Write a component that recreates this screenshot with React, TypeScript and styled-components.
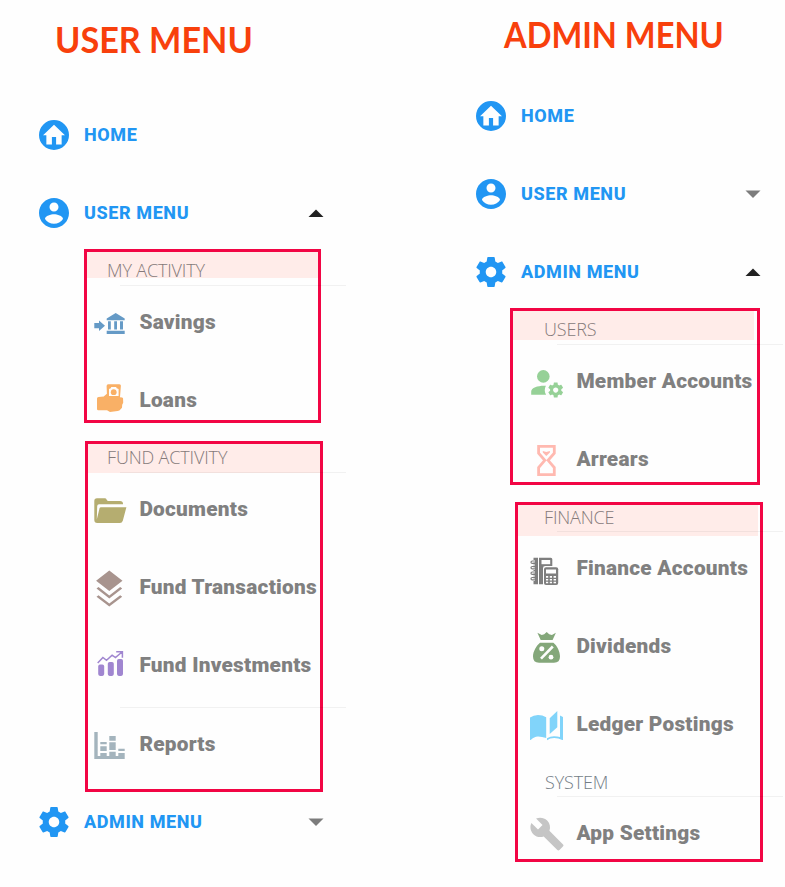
import React from "react";
import styled, { createGlobalStyle } from "styled-components";

const GlobalStyle = createGlobalStyle`
  * { box-sizing: border-box; }
  body { margin: 0; background: #fefefe; overflow: hidden; }
`;

const Page = styled.main`
  display: grid;
  grid-template-columns: 437px 348px;
  width: 785px;
  height: 887px;
  overflow: hidden;
  background: #fefefe;
`;

const Column = styled.section<{ $top: number }>`
  display: flex;
  flex-direction: column;
  align-items: flex-start;
  padding-top: ${(p) => p.$top}px;
  min-width: 0;
`;

const Title = styled.h1<{ $indent: number; $gap: number; $scale: number }>`
  margin: 0 0 ${(p) => p.$gap}px ${(p) => p.$indent}px;
  height: 40px;
  font: 700 36px/40px Lato, sans-serif;
  color: #f8400c;
  white-space: nowrap;
  transform: scaleX(${(p) => p.$scale});
  transform-origin: left center;
`;

const NavRow = styled.div`
  display: flex;
  align-items: center;
  flex: none;
  width: 324px;
  height: 40px;
  padding-left: 36px;
  margin-bottom: 38px;
  color: #2196f3;
`;

const NavLabel = styled.span`
  flex: 1;
  margin-left: 12px;
  font: 800 18px/24px Roboto, sans-serif;
  letter-spacing: 0.6px;
`;

const Frame = styled.div<{ $left: number; $width: number; $height: number; $before?: number; $after?: number }>`
  display: flex;
  flex-direction: column;
  flex: none;
  width: ${(p) => p.$width}px;
  height: ${(p) => p.$height}px;
  margin: ${(p) => p.$before ?? 0}px 0 ${(p) => p.$after ?? 0}px ${(p) => p.$left}px;
  border: 3px solid #f20544;
`;

const Band = styled.div<{ $height: number; $pad: number; $right?: number; $lift?: number; $plain?: boolean; $before?: number }>`
  flex: none;
  height: ${(p) => p.$height}px;
  margin-top: ${(p) => p.$before ?? 0}px;
  margin-right: ${(p) => p.$right ?? 0}px;
  padding-left: ${(p) => p.$pad}px;
  padding-top: ${(p) => p.$lift ?? 0}px;
  background: ${(p) => (p.$plain ? "transparent" : "#ffece9")};
  color: ${(p) => (p.$plain ? "#737d86" : "#857a7a")};
  font: 300 18px/24px "Open Sans", sans-serif;
  letter-spacing: -0.15px;
  white-space: nowrap;
`;

const Divider = styled.div<{ $left: number; $before: number; $after: number }>`
  flex: none;
  width: 226px;
  height: 1px;
  margin: ${(p) => p.$before}px 0 ${(p) => p.$after}px ${(p) => p.$left}px;
  background: rgba(0, 0, 0, 0.05);
`;

const Items = styled.div<{ $pad: number }>`
  display: flex;
  flex-direction: column;
  gap: 42px;
  padding-left: ${(p) => p.$pad}px;
`;

const ItemRow = styled.div`
  display: flex;
  align-items: center;
  height: 36px;
  white-space: nowrap;
`;

const ItemLabel = styled.span`
  margin-left: 9.4px;
  font: 900 20.8px/26px Roboto, sans-serif;
  letter-spacing: 0.25px;
  color: #808080;
`;

const Glyph = styled.svg<{ $size: number }>`
  display: block;
  flex: none;
  width: ${(p) => p.$size}px;
  height: ${(p) => p.$size}px;
`;

const NavGlyph = styled(Glyph)`
  margin-bottom: 1px;
`;

const GEAR =
  "M19.43 12.98c.04-.32.07-.64.07-.98s-.03-.66-.07-.98l2.11-1.65c.19-.15.24-.42.12-.64l-2-3.46c-.12-.22-.39-.3-.61-.22l-2.49 1c-.52-.4-1.08-.73-1.69-.98l-.38-2.65C14.46 2.18 14.25 2 14 2h-4c-.25 0-.46.18-.49.42l-.38 2.65c-.61.25-1.17.59-1.69.98l-2.49-1c-.23-.09-.49 0-.61.22l-2 3.46c-.13.22-.07.49.12.64l2.11 1.65c-.04.32-.07.65-.07.98s.03.66.07.98l-2.11 1.65c-.19.15-.24.42-.12.64l2 3.46c.12.22.39.3.61.22l2.49-1c.52.4 1.08.73 1.69.98l.38 2.65c.03.24.24.42.49.42h4c.25 0 .46-.18.49-.42l.38-2.65c.61-.25 1.17-.59 1.69-.98l2.49 1c.23.09.49 0 .61-.22l2-3.46c.12-.22.07-.49-.12-.64l-2.11-1.65zM12 15.5c-1.93 0-3.5-1.57-3.5-3.5s1.57-3.5 3.5-3.5 3.5 1.57 3.5 3.5-1.57 3.5-3.5 3.5z";

const NAV_PATHS = {
  home: "M12 2a10 10 0 1 0 0 20 10 10 0 0 0 0-20zM12 5.2l7.3 7h-2.2v6.1h-3.7v-5h-2.8v5H6.900v-6.100H4.700z",
  user: "M12 2C6.48 2 2 6.48 2 12s4.48 10 10 10 10-4.48 10-10S17.52 2 12 2zm0 3c1.66 0 3 1.34 3 3s-1.34 3-3 3-3-1.34-3-3 1.34-3 3-3zm0 14.2c-2.5 0-4.71-1.28-6-3.22.03-1.99 4-3.08 6-3.08 1.99 0 5.97 1.09 6 3.08-1.29 1.94-3.5 3.22-6 3.22z",
  gear: GEAR,
};

const ICONS: Record<string, { color: string; art: React.ReactNode }> = {
  Savings: {
    color: "#659ac6",
    art: (
      <path d="M4.3 21H9v-2.6l6 5.3-6 5.3v-2.7H4.3zM25.7 11l9 5.5v1.8h-18v-1.8zM18 19.2h2.8v8.2H18zM24.2 19.2h2.8v8.2h-2.8zM30 19.2h3v8.2h-3zM16.7 28.8h18V32h-18z" />
    ),
  },
  Loans: {
    color: "#f9b066",
    art: (
      <>
        <path d="M18.2 4.3h11.2q1.6 0 1.5 1.5L30 17.2l2.2.2q1.2.5.9 2l.1 3.4-1 2-.2 3-1.4 1.4q-1 1.6-3 1.7L20 32l-3-1.7H8.2Q7 30.3 7 29V18.6q0-1.5 1.5-1.7l5.2-.5 3.2-2.6-.3-7.8q0-1.7 1.6-1.7z" />
        <path d="M21.3 7h4.8l.6 1.3 1.9.8v7H19V9.1l1.7-.8z" fill="#fefefe" />
        <circle cx="23.7" cy="12.2" r="2.9" />
      </>
    ),
  },
  Documents: {
    color: "#b5ad70",
    art: (
      <path d="M4.3 12q0-2.7 2.7-2.7h7.8q1.4 0 1.9 1.4.5 1.3 1.8 1.3H30q3 0 3.1 3.3H9q-1.6 0-1.8 1.6L6.8 30.5 9.6 19q.3-.8 1.3-.8h25.5L32.8 31.8Q32 34 30 34H7.3q-3 0-3-3z" />
    ),
  },
  "Fund Transactions": {
    color: "#a8948e",
    art: (
      <path d="M19.3 3.6l13.2 10.2-13.2 10.3L6.1 13.8zM6.5 21.5l2-1.5 10.8 8.4L30.2 20l2 1.5-12.9 10zM6.5 29.7l2-1.5 10.8 8.3 10.9-8.3 2 1.5-12.9 9.8z" />
    ),
  },
  "Fund Investments": {
    color: "#a086d0",
    art: (
      <>
        <rect x="8.2" y="19.6" width="6" height="11.3" rx="1.8" />
        <rect x="17.8" y="16.9" width="6" height="14" rx="1.8" />
        <rect x="27" y="13.9" width="6" height="17" rx="1.8" />
        <path d="M7.7 18l5.2-5.5 3.6 2.8 5.6-5.2 3.4 2.4 6.8-5.7M26.2 6.7h6.2v6" fill="none" stroke="#a086d0" strokeWidth="1.5" />
      </>
    ),
  },
  Reports: {
    color: "#a4b4bd",
    art: (
      <path d="M4.3 8h3.4v24h2.6v-3h6.4v3h2.6v-4.3h6.4V32h2.6v-3h6.4v6H4.3zM10.3 18h6.4v2.3h-6.4zM10.3 22.3h6.4V27h-6.4zM19.3 12h6.4v4.7h-6.4zM19.3 18.3h6.4V26h-6.4zM28.3 24.7h6.4V27h-6.4z" />
    ),
  },
  "Member Accounts": {
    color: "#96d197",
    art: (
      <>
        <circle cx="16.3" cy="15.4" r="6.3" />
        <path d="M4.2 33.7v-3.3c0-4 8-6.1 14.7-5.6-1.5 3-1.6 6 .2 8.9z" />
        <path d={GEAR} transform="translate(19.7 20) scale(.75)" />
      </>
    ),
  },
  Arrears: {
    color: "#ffb9b0",
    art: (
      <>
        <path d="M11.6 7.4h15.7v6.8l-6.2 7.1 6.2 7.3v7H11.6v-7l6.2-7.3-6.2-7.1z" fill="none" stroke="#ffb9b0" strokeWidth="2.8" />
        <path d="M15.8 12l3.5 1 3.6-1v1.4L19.3 17l-3.5-3.6z" />
      </>
    ),
  },
  "Finance Accounts": {
    color: "#7e7e7e",
    art: (
      <>
        <path d="M6.500 9.700H11v26.600H6.500zM12 9.700h11.800q1.500 0 1.500 1.500V18h-7q-2.300 0-2.300 2.300v16h-4z" />
        <path d="M14.500 12h8.700v4.200h-8.700z" fill="#fefefe" />
        <path d="M8 13H5.200q-1.300 0-1.300 1.200t1.300 1.200H8M8 18.500H5.200q-1.300 0-1.300 1.200t1.300 1.200H8M8 24H5.200q-1.300 0-1.300 1.200t1.300 1.200H8M8 29.500H5.200q-1.300 0-1.300 1.200t1.300 1.200H8" fill="none" stroke="#fefefe" strokeWidth="2" />
        <path d="M9 13H5.300q-1.300 0-1.300 1.200t1.300 1.200H9M9 18.500H5.300q-1.300 0-1.300 1.200t1.300 1.200H9M9 24H5.300q-1.300 0-1.300 1.200t1.300 1.200H9M9 29.500H5.300q-1.300 0-1.300 1.200t1.300 1.200H9" fill="none" stroke="#7e7e7e" strokeWidth="1.200" />
        <rect x="17" y="19.200" width="14.200" height="17.800" rx="2" />
        <path d="M19 21.600h10v4H19zM19 28h2.200v1.800H19zM22.800 28H25v1.800h-2.200zM26.600 28H29v1.800h-2.400zM19 30.900h2.200v1.700H19zM22.800 30.900H25v1.700h-2.200zM26.600 30.900H29v1.700h-2.400zM19 33.700h2.200v1.500H19zM22.800 33.700H25v1.500h-2.200zM26.600 33.700H29v1.500h-2.400z" fill="#fefefe" />
      </>
    ),
  },
  Dividends: {
    color: "#84a77a",
    art: (
      <>
        <path d="M10.4 6.8l4.3 2.3 2.5-.9L19.7 6l2.5 2.2 2.7.9 4-2.3-3.3 7.2H13.7zM13 16.8h13.4C30 19.5 33 25.5 33 30.5q0 6.2-6 6.2H12q-6 0-6-6.2c0-5 3.5-11 7-13.7z" />
        <path d="M14 32.7L25.8 20.5" stroke="#fefefe" strokeWidth="2.6" />
        <circle cx="14.8" cy="22.7" r="2.5" fill="#fefefe" />
        <circle cx="24" cy="31.2" r="2.4" fill="#fefefe" />
      </>
    ),
  },
  "Ledger Postings": {
    color: "#81d4fa",
    art: (
      <path d="M30.3 7v16.3l-7.6 6.8V14.3zM3 13.5Q6.5 11 11 11q4.5 0 8.2 2.2V34Q15 32.4 11 32.4T3.7 36Q3 36.2 3 35.5zM33 11.5l3 1.5v22.5q0 .7-.8.5-3.7-2-8-2-4.2 0-7.200 2.200v-2q3.200-2 7-2 3.300 0 6 .9z" />
    ),
  },
  "App Settings": {
    color: "#c5c5c5",
    art: (
      <path
        transform="translate(2 3) scale(1.5)"
        d="M22.7 19l-9.1-9.1c.9-2.3.4-5-1.5-6.9-2-2-5-2.4-7.4-1.3L9 6 6 9 1.6 4.7C.4 7.1.9 10.1 2.9 12.1c1.9 1.9 4.6 2.4 6.9 1.5l9.1 9.1c.4.4 1 .4 1.4 0l2.3-2.3c.5-.4.5-1.1.1-1.4z"
      />
    ),
  },
};

function Nav({ icon, label, caret }: { icon: keyof typeof NAV_PATHS; label: string; caret?: "up" | "down" }) {
  return (
    <NavRow>
      <NavGlyph $size={36} viewBox="0 0 24 24" fill="currentColor" fillRule="evenodd">
        <path d={NAV_PATHS[icon]} />
      </NavGlyph>
      <NavLabel>{label}</NavLabel>
      {caret && (
        <Glyph $size={16} viewBox="0 0 16 16" fill={caret === "up" ? "#212121" : "#7c7c7c"}>
          <path d={caret === "up" ? "M.5 12L8 4.5 15.5 12z" : "M.5 4.5h15L8 12z"} />
        </Glyph>
      )}
    </NavRow>
  );
}

function ItemList({ pad, names }: { pad: number; names: string[] }) {
  return (
    <Items $pad={pad}>
      {names.map((name) => (
        <ItemRow key={name}>
          <Glyph $size={40} viewBox="0 0 40 40" fill={ICONS[name].color}>
            {ICONS[name].art}
          </Glyph>
          <ItemLabel>{name}</ItemLabel>
        </ItemRow>
      ))}
    </Items>
  );
}

export default function App() {
  return (
    <>
      <GlobalStyle />
      <Page>
        <Column $top={19}>
          <Title $indent={55} $gap={56} $scale={0.95}>USER MENU</Title>
          <Nav icon="home" label="HOME" />
          <Nav icon="user" label="USER MENU" caret="up" />
          <Frame $left={84} $width={237} $height={174} $before={-22} $after={18}>
            <Band $height={26} $pad={20} $lift={6}>MY ACTIVITY</Band>
            <Divider $left={33} $before={7} $after={18} />
            <ItemList pad={3} names={["Savings", "Loans"]} />
          </Frame>
          <Frame $left={85} $width={238} $height={351} $after={10}>
            <Band $height={29} $pad={19} $lift={1}>FUND ACTIVITY</Band>
            <Divider $left={32} $before={-1} $after={18} />
            <ItemList pad={2} names={["Documents", "Fund Transactions", "Fund Investments"]} />
            <Divider $left={32} $before={24} $after={18} />
            <ItemList pad={2} names={["Reports"]} />
          </Frame>
          <Nav icon="gear" label="ADMIN MENU" caret="down" />
        </Column>
        <Column $top={14}>
          <Title $indent={67} $gap={42} $scale={0.905}>ADMIN MENU</Title>
          <Nav icon="home" label="HOME" />
          <Nav icon="user" label="USER MENU" caret="down" />
          <Nav icon="gear" label="ADMIN MENU" caret="up" />
          <Frame $left={73} $width={250} $height={177} $before={-22} $after={17}>
            <Band $height={29} $pad={31} $right={3} $lift={6}>USERS</Band>
            <Divider $left={44} $before={4} $after={18} />
            <ItemList pad={14} names={["Member Accounts", "Arrears"]} />
          </Frame>
          <Frame $left={78} $width={248} $height={360}>
            <Band $height={31} $pad={26} $right={2}>FINANCE</Band>
            <Divider $left={39} $before={-5} $after={18} />
            <ItemList pad={9} names={["Finance Accounts", "Dividends", "Ledger Postings"]} />
            <Band $height={24} $pad={27} $before={28} $plain>SYSTEM</Band>
            <Divider $left={39} $before={2} $after={18} />
            <ItemList pad={9} names={["App Settings"]} />
          </Frame>
        </Column>
      </Page>
    </>
  );
}
